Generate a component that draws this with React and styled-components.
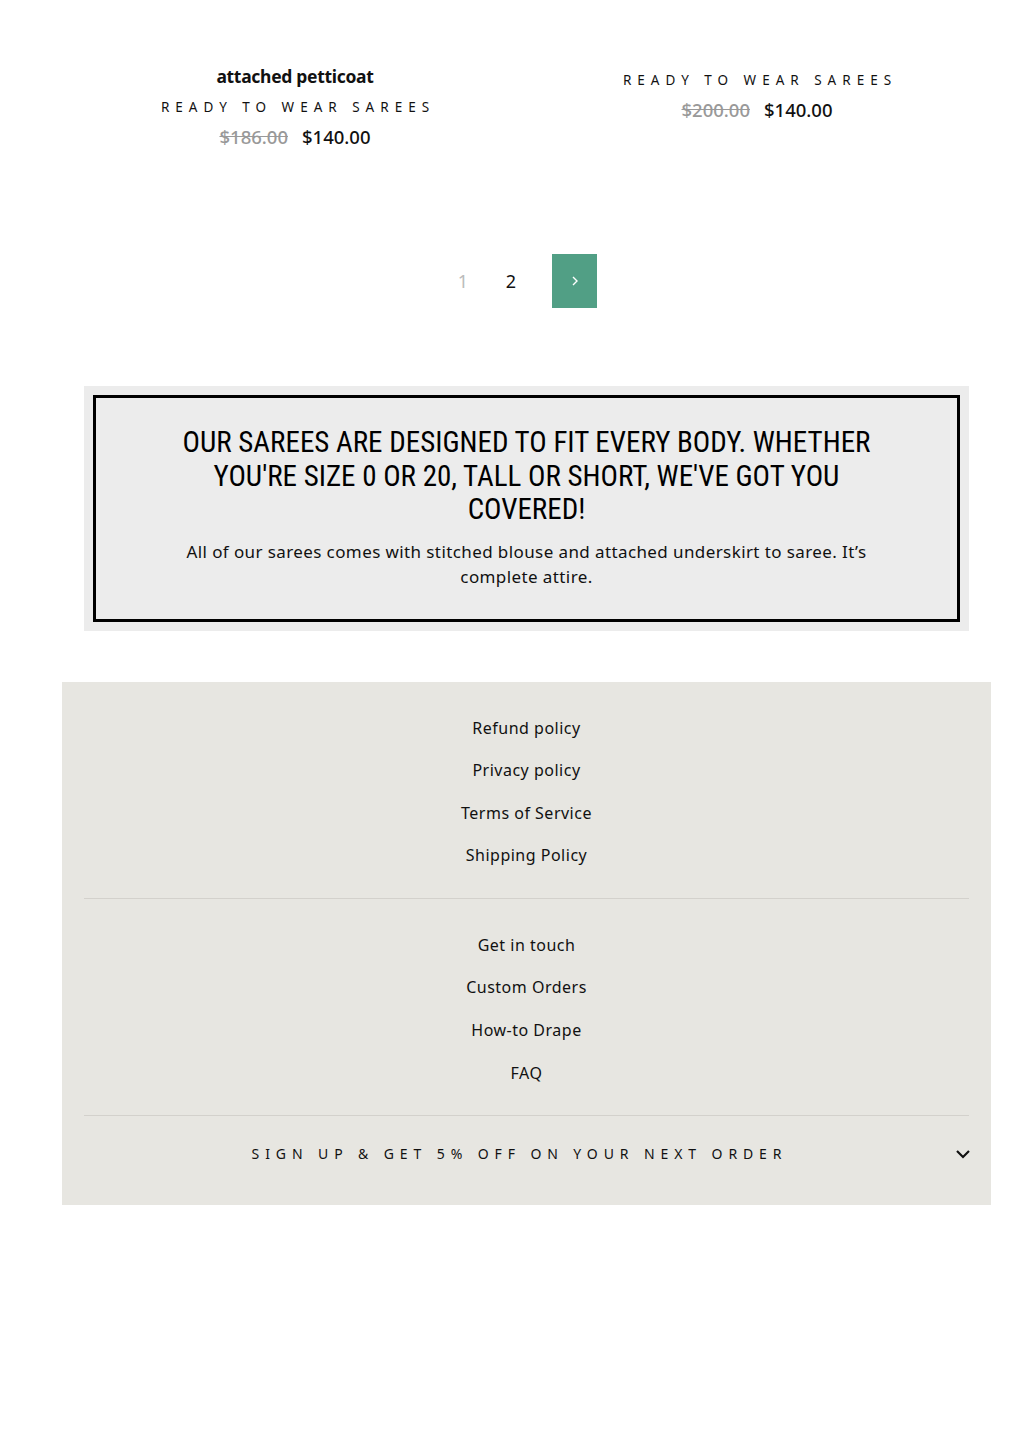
import React from "react";
import styled, { createGlobalStyle } from "styled-components";

const Global = createGlobalStyle`
  html, body { margin: 0; padding: 0; background: #fff; }
  body { font-family: "Noto Sans", "Liberation Sans", sans-serif; color: #111; }
  * { box-sizing: border-box; }
`;

const Page = styled.div`
  width: 1024px;
  min-height: 1449px;
  padding-top: 62px;
`;

const Products = styled.div`
  display: grid;
  grid-template-columns: 462px 462px;
  padding-left: 64px;
  align-items: start;
`;

const Card = styled.div`
  display: flex;
  flex-direction: column;
  align-items: center;
  padding-top: ${(p) => p.$offset || 0}px;
`;

const Title = styled.div`
  font-family: "Noto Sans", sans-serif;
  font-weight: 700;
  font-size: 17.5px;
  line-height: 28px;
  letter-spacing: -0.3px;
  margin-bottom: 2px;
`;

const Category = styled.div`
  font-size: 13.5px;
  letter-spacing: 6px;
  line-height: 30px;
  margin-right: -6px;
  text-transform: uppercase;
`;

const Prices = styled.div`
  display: flex;
  gap: 14px;
  font-size: 18.5px;
  line-height: 30px;
  font-weight: 500;
`;

const Old = styled.s`
  color: #999;
`;

const Pager = styled.nav`
  display: flex;
  justify-content: center;
  align-items: center;
  margin-top: 102px;
  padding-left: 12px;
`;

const PageNum = styled.span`
  width: 48px;
  text-align: center;
  font-size: 18px;
  color: ${(p) => (p.$muted ? "#bbb" : "#111")};
`;

const NextBtn = styled.a`
  width: 45px;
  height: 54px;
  margin-left: 17px;
  background: #519f85;
  display: flex;
  align-items: center;
  justify-content: center;
  color: #fff;
`;

const Banner = styled.section`
  margin: 78px 55px 0 84px;
  background: #ececec;
  padding: 9px;
`;

const BannerInner = styled.div`
  border: 3px solid #000;
  padding: 28px 20px 30px;
  display: flex;
  flex-direction: column;
  align-items: center;
  text-align: center;
`;

const Heading = styled.h2`
  margin: 0;
  max-width: 720px;
  font-family: "Roboto Condensed", "Liberation Sans Narrow", "DejaVu Sans Condensed", sans-serif;
  font-stretch: condensed;
  font-weight: 400;
  font-size: 29px;
  line-height: 33.5px;
  text-transform: uppercase;
  color: #000;
`;

const Para = styled.p`
  margin: 12px 0 0;
  max-width: 700px;
  font-size: 17px;
  line-height: 25px;
  letter-spacing: 0.4px;
  color: #111;
`;

const Footer = styled.footer`
  margin: 51px 33px 0 62px;
  background: #e7e6e1;
  padding: 0 22px;
`;

const LinkGroup = styled.ul`
  list-style: none;
  margin: 0;
  padding: 25px 0 21px;
  display: flex;
  flex-direction: column;
  align-items: center;
  border-bottom: 1.5px solid #d3d1cc;
`;

const FooterLink = styled.li`
  font-size: 16px;
  line-height: 42.6px;
  letter-spacing: 0.5px;
  color: #111;
`;

const Signup = styled.div`
  position: relative;
  display: flex;
  justify-content: center;
  align-items: center;
  padding: 19px 0 32px;
  line-height: 38px;
  font-size: 14px;
  letter-spacing: 5.9px;
  color: #111;
`;

const SignupText = styled.span`
  margin-right: 14px;
`;

const Chevron = styled.span`
  position: absolute;
  right: -2px;
  top: 33px;
  display: flex;
`;

export default function App() {
  return (
    <>
      <Global />
      <Page>
        <Products>
          <Card>
            <Title>attached petticoat</Title>
            <Category>Ready to wear sarees</Category>
            <Prices>
              <Old>$186.00</Old>
              <span>$140.00</span>
            </Prices>
          </Card>
          <Card $offset={3}>
            <Category>Ready to wear sarees</Category>
            <Prices>
              <Old>$200.00</Old>
              <span>$140.00</span>
            </Prices>
          </Card>
        </Products>

        <Pager>
          <PageNum $muted>1</PageNum>
          <PageNum>2</PageNum>
          <NextBtn>
            <svg width="12" height="12" viewBox="0 0 12 12" fill="none" stroke="#fff" strokeWidth="1.4">
              <path d="M4 2 L8 6 L4 10" />
            </svg>
          </NextBtn>
        </Pager>

        <Banner>
          <BannerInner>
            <Heading>
              Our sarees are designed to fit every body. Whether you're size 0 or 20, tall or short, we've got you covered!
            </Heading>
            <Para>
              All of our sarees comes with stitched blouse and attached underskirt to saree. It’s complete attire.
            </Para>
          </BannerInner>
        </Banner>

        <Footer>
          <LinkGroup>
            <FooterLink>Refund policy</FooterLink>
            <FooterLink>Privacy policy</FooterLink>
            <FooterLink>Terms of Service</FooterLink>
            <FooterLink>Shipping Policy</FooterLink>
          </LinkGroup>
          <LinkGroup>
            <FooterLink>Get in touch</FooterLink>
            <FooterLink>Custom Orders</FooterLink>
            <FooterLink>How-to Drape</FooterLink>
            <FooterLink>FAQ</FooterLink>
          </LinkGroup>
          <Signup>
            <SignupText>SIGN UP &amp; GET 5% OFF ON YOUR NEXT ORDER</SignupText>
            <Chevron>
              <svg width="16" height="10" viewBox="0 0 16 10" fill="none" stroke="#111" strokeWidth="2.2">
                <path d="M2 2 L8 8 L14 2" />
              </svg>
            </Chevron>
          </Signup>
        </Footer>
      </Page>
    </>
  );
}
